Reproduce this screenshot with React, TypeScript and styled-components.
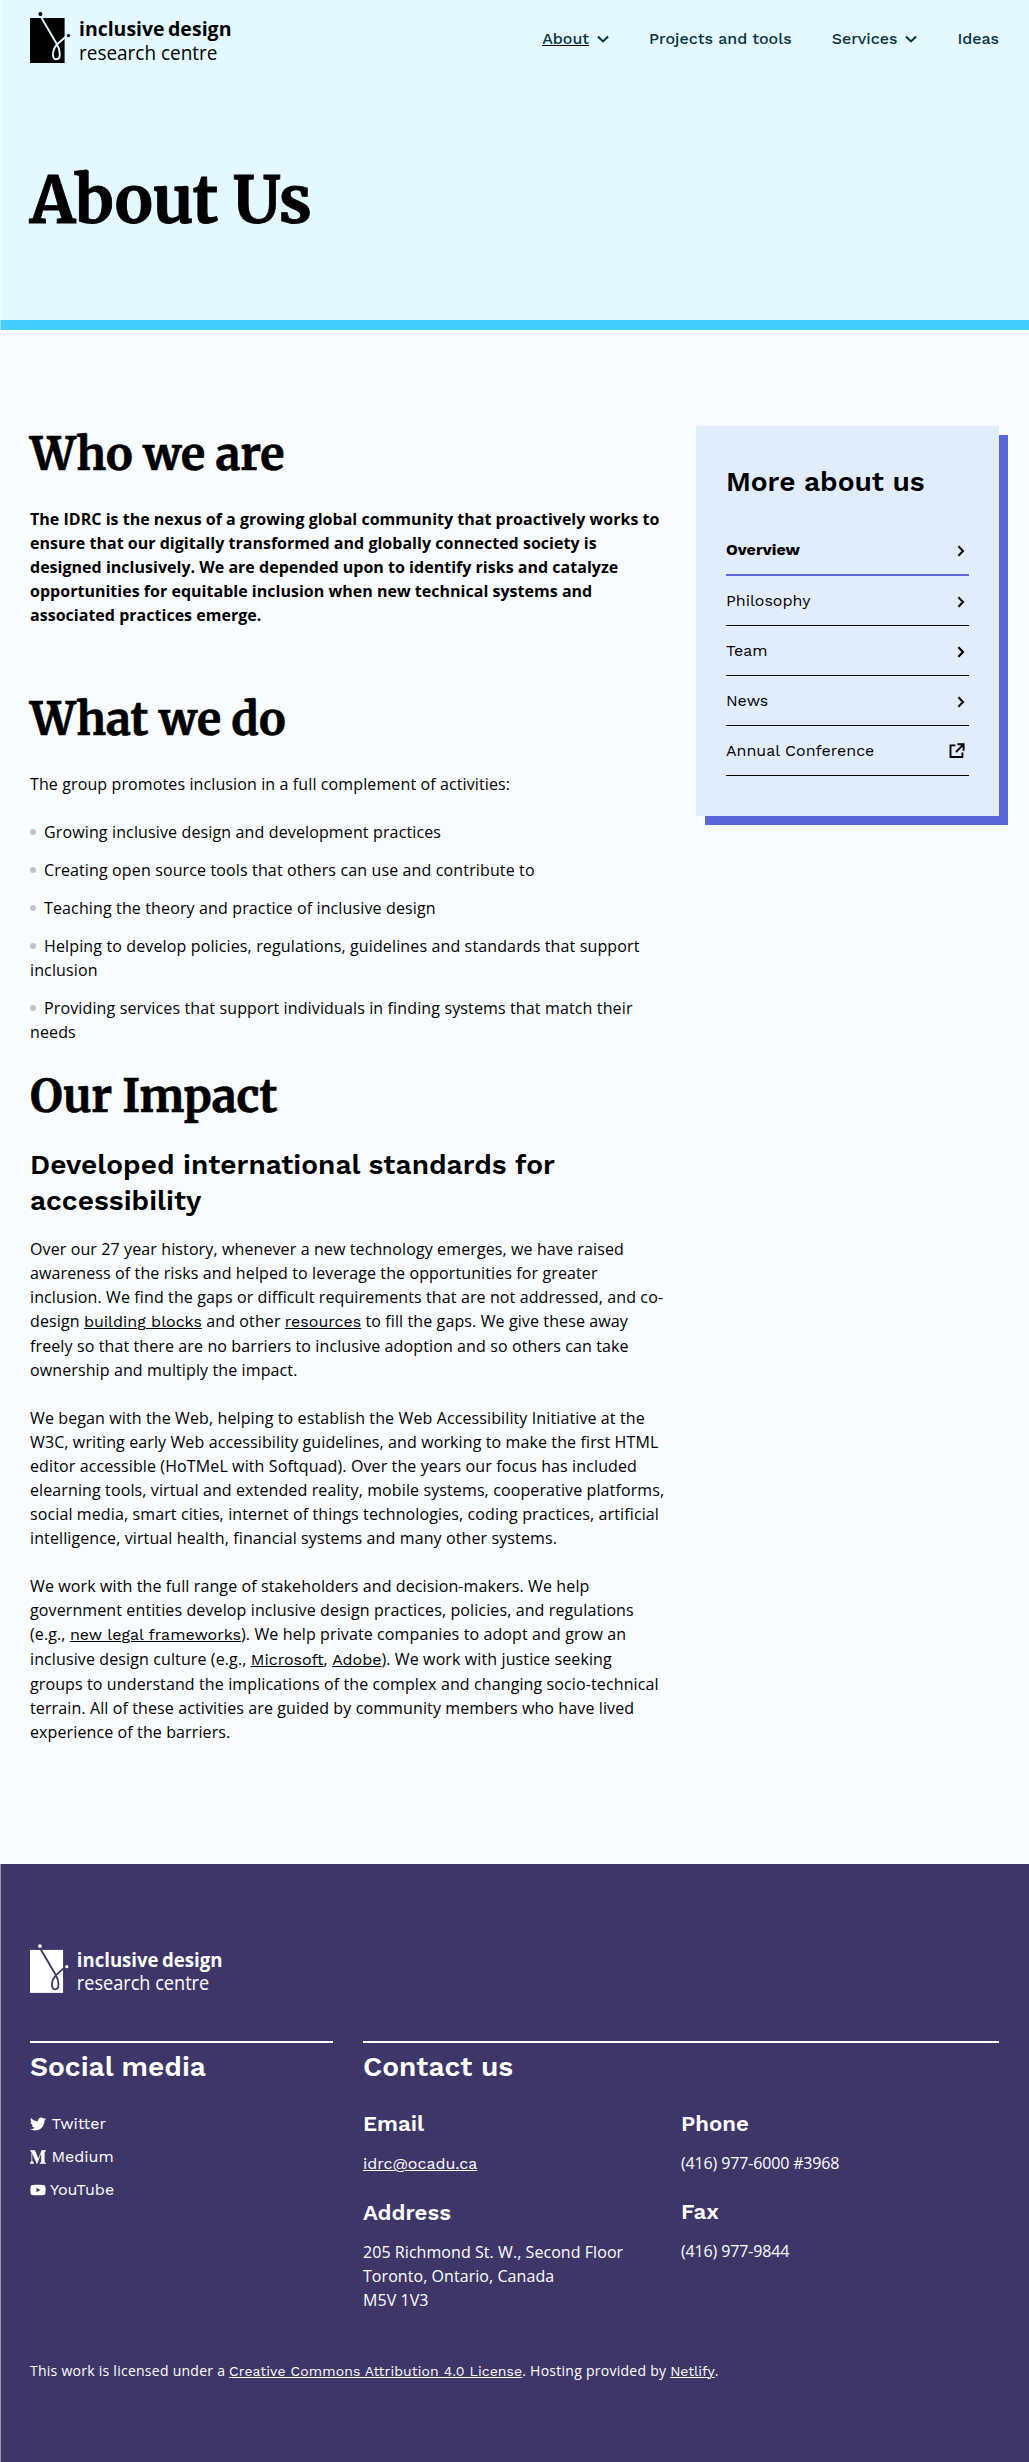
import React from 'react';
import styled, { createGlobalStyle, css } from 'styled-components';
import { FaTwitter, FaYoutube } from 'react-icons/fa';

const sans = css`font-family: 'Open Sans', 'Noto Sans', sans-serif;`;
const display = css`font-family: 'Work Sans', Inter, 'Liberation Sans', sans-serif;`;
const slab = css`font-family: Merriweather, 'DejaVu Serif Condensed', 'DejaVu Serif', serif;`;

const GlobalStyle = createGlobalStyle`
  * { box-sizing: border-box; }
  body { margin: 0; background: #f9fcff; color: #000; ${sans} font-size: 16px; line-height: 24px; }
  h1, h2, h3, h4, p, ul { margin: 0; padding: 0; }
  ul { list-style: none; }
  a { color: inherit; text-decoration: none; }
`;

const Hero = styled.header`
  height: 320px;
  padding: 0 30px;
  background: #e3f8ff;
  box-shadow: inset 1px 0 #edfbff;
`;
const HeroRule = styled.div`
  height: 10px;
  background: #44ceff;
  box-shadow: inset 1px 0 #9fe5ff;
`;
const TopBar = styled.div`
  display: flex;
  justify-content: space-between;
  height: 78px;
  padding-top: 10px;
`;
const Nav = styled.nav`
  display: flex;
  gap: 40px;
  padding-top: 16px;
  color: #08333f;
`;
const NavLink = styled.a<{ $current?: boolean }>`
  display: flex;
  align-items: center;
  gap: 8px;
  height: 25px;
  ${display}
  font-size: 16px;
  font-weight: 500;
  span { text-decoration: ${p => (p.$current ? 'underline #000 1px' : 'none')}; }
`;
const PageTitle = styled.h1`
  ${slab}
  margin-top: 78px;
  font-size: 64px;
  line-height: 88px;
  letter-spacing: -0.35px;
  -webkit-text-stroke: 0.8px currentColor;
`;
const Main = styled.main`
  display: grid;
  grid-template-columns: 636px 303px;
  gap: 30px;
  align-items: start;
  padding: 96px 30px 120px;
`;
const Article = styled.article`
  letter-spacing: 0.115px;
`;
const Title = styled.h2<{ $top?: number; $height?: number }>`
  ${slab}
  margin-top: ${p => p.$top ?? 0}px;
  height: ${p => p.$height ?? 81}px;
  font-size: 44.8px;
  line-height: 56px;
  letter-spacing: -0.2px;
  -webkit-text-stroke: 0.6px currentColor;
`;
const SubTitle = styled.h3`
  ${display}
  height: 72px;
  font-size: 28.05px;
  font-weight: 600;
  line-height: 36px;
  letter-spacing: 0;
`;
const BlockTitle = styled(SubTitle)`height: 36px;`;
const Copy = styled.p<{ $bold?: boolean }>`
  font-weight: ${p => (p.$bold ? 700 : 400)};
  letter-spacing: ${p => (p.$bold ? '0.02px' : 'inherit')};
  & + & { margin-top: 24px; }
  ${SubTitle} + & { margin-top: 18px; }
`;
const TextLink = styled.a<{ $spacing?: number }>`
  ${display}
  letter-spacing: ${p => p.$spacing ?? 0}px;
  text-decoration: underline 1px;
`;
const Activities = styled.ul`
  display: grid;
  gap: 14px;
  margin: 24px 0 0;
  letter-spacing: 0.135px;
`;
const Activity = styled.li`
  &::before {
    content: '';
    display: inline-block;
    width: 6px;
    height: 6px;
    margin-right: 8px;
    border-radius: 50%;
    background: #c2c4c6;
    vertical-align: 3px;
  }
`;
const Aside = styled.aside`
  height: 390px;
  padding: 38px 30px 40px;
  background: #e1edfb;
  box-shadow: 9px 9px #5a67d8;
`;
const AsideList = styled.ul`margin-top: 25px;`;
const AsideItem = styled.li<{ $current?: boolean }>`
  display: flex;
  align-items: center;
  justify-content: space-between;
  height: ${p => (p.$current ? 51 : 50)}px;
  padding-right: 4px;
  border-bottom: ${p => (p.$current ? '2px solid #5a67d8' : '1px solid #000')};
  ${display}
  font-weight: ${p => (p.$current ? 700 : 400)};
`;
const Footer = styled.footer`
  height: 598px;
  padding: 78px 30px 0;
  background: #3e3669;
  box-shadow: inset 1px 0 #9b97b5;
  color: #fff;
`;
const FooterColumns = styled.div`
  display: grid;
  grid-template-columns: 303px 636px;
  gap: 30px;
  margin-top: 45px;
`;
const FooterBlock = styled.section`
  border-top: 2px solid #fff;
  padding-top: 6px;
`;
const Social = styled.ul`
  margin-top: 22px;
`;
const SocialItem = styled.li<{ $gap?: number }>`
  display: flex;
  align-items: center;
  gap: ${p => p.$gap ?? 5.5}px;
  height: 33px;
  ${display}
`;
const ContactGrid = styled.div`
  display: grid;
  grid-template-columns: 1fr 1fr;
  margin-top: 24px;
`;
const ContactTitle = styled.h4`
  ${display}
  font-size: 22.2px;
  font-weight: 600;
  line-height: 28px;
  margin-bottom: 14px;
`;
const ContactItem = styled.div`margin-bottom: 22px;`;
const Address = styled.p`letter-spacing: 0.06px;`;
const Phone = styled.p`letter-spacing: -0.15px;`;
const Legal = styled.p`
  margin-top: 25px;
  font-size: 14px;
  letter-spacing: 0.26px;
`;

const LogoSvg = styled.svg`display: block;`;

const Logo = ({ width, height, fill, line }: { width: number; height: number; fill: string; line: string }) => (
  <LogoSvg width={width} height={height} viewBox="0 0 203 56" fill={fill} fontFamily="'Open Sans', 'Noto Sans', sans-serif" fontSize="20.4">
    <rect x="0" y="8" width="34.6" height="45" />
    <path d="M11 7 L26.5 33.5 C28.6 37 29.8 41 29.8 44 C29.8 47.5 28.4 49.3 26.4 49.3 C24.2 49.3 23 47.3 23 44.5 C23 40 25 36.5 27.8 33.8 L36 26.5" fill="none" stroke={line} strokeWidth="1.9" />
    <circle cx="10.4" cy="4" r="2" />
    <circle cx="38.5" cy="25.6" r="1.7" />
    <text x="49" y="26" fontWeight="700" textLength="85.5" lengthAdjust="spacingAndGlyphs">inclusive</text>
    <text x="138" y="26" fontWeight="700" textLength="63.5" lengthAdjust="spacingAndGlyphs">design</text>
    <text x="49" y="49.5" textLength="138.5" lengthAdjust="spacingAndGlyphs">research centre</text>
  </LogoSvg>
);

const ChevronDown = () => (
  <svg width="12" height="9" viewBox="0 0 12 9" fill="none" stroke="currentColor" strokeWidth="2.1">
    <path d="M0.9 2.4 L6 7.4 L11.1 2.4" />
  </svg>
);
const ChevronRight = () => (
  <svg width="8" height="14" viewBox="0 0 8 14" fill="none" stroke="#000" strokeWidth="2.1">
    <path d="M1.4 3.3 L6 8 L1.4 12.7" />
  </svg>
);
const External = () => (
  <svg width="16" height="16" viewBox="0 0 16 16" fill="none" stroke="#000" strokeWidth="1.9">
    <path d="M6.4 2.4 H1.5 V14 H13.4 V9.6 M8.4 1.3 H14.6 V7.8 M14.2 1.7 L7 9" />
  </svg>
);
const MediumMark = () => (
  <svg width="16" height="14" viewBox="0 0 16 14" fill="#fff">
    <path d="M0.2 0.3 H4.9 L8.4 8.4 L11.6 0.3 H16 V1 L14.6 2 V11.9 L16 13 V13.7 H9.7 V13 L11.2 11.9 V3.6 L7.2 13.7 H6.6 L2.2 3.6 V10.7 L4 13 V13.7 H0 V13 L1.5 10.9 V2.3 L0.2 0.9 Z" />
  </svg>
);

export default function App() {
  return (
    <>
      <GlobalStyle />
      <Hero>
        <TopBar>
          <Logo width={203} height={56} fill="#000" line="#e3f8ff" />
          <Nav>
            <NavLink $current><span>About</span><ChevronDown /></NavLink>
            <NavLink><span>Projects and tools</span></NavLink>
            <NavLink><span>Services</span><ChevronDown /></NavLink>
            <NavLink><span>Ideas</span></NavLink>
          </Nav>
        </TopBar>
        <PageTitle>About Us</PageTitle>
      </Hero>
      <HeroRule />
      <Main>
        <Article>
          <Title>Who we are</Title>
          <Copy $bold>The IDRC is the nexus of a growing global community that proactively works to ensure that our digitally transformed and globally connected society is designed inclusively. We are depended upon to identify risks and catalyze opportunities for equitable inclusion when new technical systems and associated practices emerge.</Copy>
          <Title $top={64}>What we do</Title>
          <Copy>The group promotes inclusion in a full complement of activities:</Copy>
          <Activities>
            <Activity>Growing inclusive design and development practices</Activity>
            <Activity>Creating open source tools that others can use and contribute to</Activity>
            <Activity>Teaching the theory and practice of inclusive design</Activity>
            <Activity>Helping to develop policies, regulations, guidelines and standards that support inclusion</Activity>
            <Activity>Providing services that support individuals in finding systems that match their needs</Activity>
          </Activities>
          <Title $top={24} $height={79}>Our Impact</Title>
          <SubTitle>Developed international standards for accessibility</SubTitle>
          <Copy>Over our 27 year history, whenever a new technology emerges, we have raised awareness of the risks and helped to leverage the opportunities for greater inclusion. We find the gaps or difficult requirements that are not addressed, and co-design <TextLink>building blocks</TextLink> and other <TextLink>resources</TextLink> to fill the gaps. We give these away freely so that there are no barriers to inclusive adoption and so others can take ownership and multiply the impact.</Copy>
          <Copy>We began with the Web, helping to establish the Web Accessibility Initiative at the W3C, writing early Web accessibility guidelines, and working to make the first HTML editor accessible (HoTMeL with Softquad). Over the years our focus has included elearning tools, virtual and extended reality, mobile systems, cooperative platforms, social media, smart cities, internet of things technologies, coding practices, artificial intelligence, virtual health, financial systems and many other systems.</Copy>
          <Copy>We work with the full range of stakeholders and decision-makers. We help government entities develop inclusive design practices, policies, and regulations (e.g., <TextLink>new legal frameworks</TextLink>). We help private companies to adopt and grow an inclusive design culture (e.g., <TextLink>Microsoft</TextLink>, <TextLink>Adobe</TextLink>). We work with justice seeking groups to understand the implications of the complex and changing socio-technical terrain. All of these activities are guided by community members who have lived experience of the barriers.</Copy>
        </Article>
        <Aside>
          <BlockTitle as="h2">More about us</BlockTitle>
          <AsideList>
            <AsideItem $current>Overview<ChevronRight /></AsideItem>
            <AsideItem>Philosophy<ChevronRight /></AsideItem>
            <AsideItem>Team<ChevronRight /></AsideItem>
            <AsideItem>News<ChevronRight /></AsideItem>
            <AsideItem>Annual Conference<External /></AsideItem>
          </AsideList>
        </Aside>
      </Main>
      <Footer>
        <Logo width={194} height={54} fill="#fff" line="#3e3669" />
        <FooterColumns>
          <FooterBlock>
            <BlockTitle as="h2">Social media</BlockTitle>
            <Social>
              <SocialItem><FaTwitter size={16} />Twitter</SocialItem>
              <SocialItem><MediumMark />Medium</SocialItem>
              <SocialItem $gap={4}><FaYoutube size={16} />YouTube</SocialItem>
            </Social>
          </FooterBlock>
          <FooterBlock>
            <BlockTitle as="h2">Contact us</BlockTitle>
            <ContactGrid>
              <div>
                <ContactItem><ContactTitle>Email</ContactTitle><p><TextLink>idrc@ocadu.ca</TextLink></p></ContactItem>
                <ContactItem><ContactTitle>Address</ContactTitle><Address>205 Richmond St. W., Second Floor<br />Toronto, Ontario, Canada<br />M5V 1V3</Address></ContactItem>
              </div>
              <div>
                <ContactItem><ContactTitle>Phone</ContactTitle><Phone>(416) 977-6000 #3968</Phone></ContactItem>
                <ContactItem><ContactTitle>Fax</ContactTitle><Phone>(416) 977-9844</Phone></ContactItem>
              </div>
            </ContactGrid>
          </FooterBlock>
        </FooterColumns>
        <Legal>This work is licensed under a <TextLink $spacing={0.1}>Creative Commons Attribution 4.0 License</TextLink>. Hosting provided by <TextLink $spacing={0}>Netlify</TextLink>.</Legal>
      </Footer>
    </>
  );
}
